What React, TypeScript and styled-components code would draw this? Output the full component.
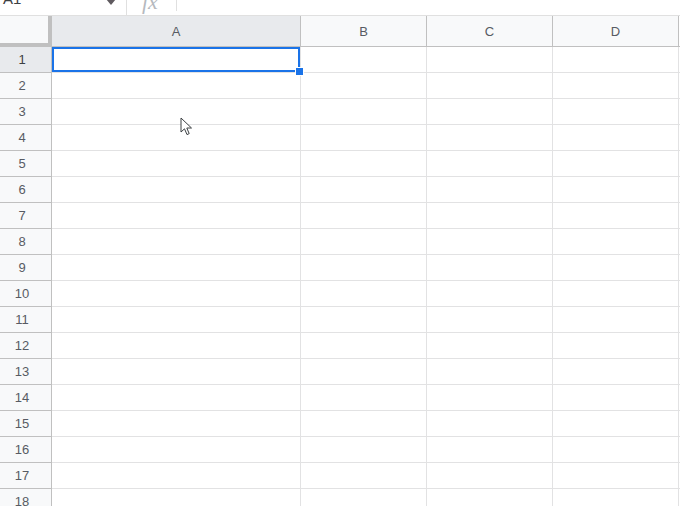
import React from 'react';
import styled, { createGlobalStyle } from 'styled-components';

const GRID_LINE = '#e2e2e3';
const HEADER_LINE = '#c0c0c0';
const HEADER_BG = '#f8f9fa';
const HEADER_SELECTED = '#e8eaed';
const BLUE = '#1a73e8';

const columns = ['A', 'B', 'C', 'D'];
const rows = Array.from({ length: 18 }, (_, i) => i + 1);

const GlobalStyle = createGlobalStyle`
  html, body {
    margin: 0;
    padding: 0;
    background: #fff;
    overflow: hidden;
  }
  body {
    font-family: Arial, "Liberation Sans", sans-serif;
  }
`;

const App = () => {
  return (
    <Page>
      <GlobalStyle />
      <FormulaBar>
        <NameBox>A1</NameBox>
        <Caret />
        <Divider />
        <Fx>fx</Fx>
        <Divider $short />
      </FormulaBar>
      <Grid>
        <Corner />
        {columns.map((col) => (
          <ColHeader key={col} $selected={col === 'A'}>
            {col}
          </ColHeader>
        ))}
        <HeaderFiller />
        {rows.map((row) => (
          <React.Fragment key={row}>
            <RowHeader $selected={row === 1}>{row}</RowHeader>
            {columns.map((col) => (
              <Cell key={col}>
                {row === 1 && col === 'A' && (
                  <Selection>
                    <Handle />
                  </Selection>
                )}
              </Cell>
            ))}
            <RowFiller />
          </React.Fragment>
        ))}
      </Grid>
      <Pointer width="14" height="20" viewBox="0 0 14 20">
        <path
          d="M1 1 L1 15 L4.5 11.8 L7 17.6 L9.2 16.6 L6.8 11 L11.5 11 Z"
          fill="#fff"
          stroke="#3c4043"
          strokeWidth="1"
          strokeLinejoin="round"
        />
      </Pointer>
    </Page>
  );
};

export default App;

const Page = styled.div`
  position: relative;
  width: 680px;
  height: 506px;
  overflow: hidden;
  background: #fff;
`;

const FormulaBar = styled.div`
  display: flex;
  align-items: flex-start;
  height: 16px;
  box-sizing: border-box;
  border-bottom: 1px solid #e0e0e0;
  overflow: hidden;
`;

const NameBox = styled.div`
  width: 100px;
  margin-top: -9px;
  padding-left: 3px;
  font-size: 15px;
  line-height: 16px;
  color: #3c4043;
`;

const Caret = styled.div`
  width: 0;
  height: 0;
  margin-top: -1px;
  margin-left: 3px;
  border-left: 5px solid transparent;
  border-right: 5px solid transparent;
  border-top: 6px solid #5f5a5f;
`;

const Divider = styled.div<{ $short?: boolean }>`
  width: 1px;
  height: ${({ $short }) => ($short ? '11px' : '15px')};
  margin-left: ${({ $short }) => ($short ? '18px' : '10px')};
  background: #e0e0e0;
`;

const Fx = styled.div`
  margin-top: -8px;
  margin-left: 15px;
  font-family: "Liberation Serif", "DejaVu Serif", serif;
  font-style: italic;
  font-size: 22px;
  line-height: 20px;
  color: #b5b9be;
`;

const Grid = styled.div`
  display: grid;
  grid-template-columns: 52px 249px 126px 126px 126px 1fr;
  grid-template-rows: 31px;
  grid-auto-rows: 26px;
`;

const Corner = styled.div`
  box-sizing: border-box;
  background: ${HEADER_BG};
  border-right: 4px solid ${HEADER_LINE};
  border-bottom: 4px solid ${HEADER_LINE};
`;

const ColHeader = styled.div<{ $selected?: boolean }>`
  box-sizing: border-box;
  display: flex;
  align-items: center;
  justify-content: center;
  background: ${({ $selected }) => ($selected ? HEADER_SELECTED : HEADER_BG)};
  border-right: 1px solid ${HEADER_LINE};
  border-bottom: 1px solid ${HEADER_LINE};
  font-size: 13px;
  color: #575b63;
`;

const HeaderFiller = styled.div`
  box-sizing: border-box;
  border-bottom: 1px solid ${HEADER_LINE};
`;

const RowHeader = styled.div<{ $selected?: boolean }>`
  box-sizing: border-box;
  display: flex;
  align-items: center;
  justify-content: center;
  padding-right: 7px;
  background: ${({ $selected }) => ($selected ? HEADER_SELECTED : HEADER_BG)};
  border-right: 1px solid ${HEADER_LINE};
  border-bottom: 1px solid ${HEADER_LINE};
  font-size: 13px;
  color: ${({ $selected }) => ($selected ? '#3c4043' : '#575b63')};
`;

const Cell = styled.div`
  position: relative;
  box-sizing: border-box;
  border-right: 1px solid ${GRID_LINE};
  border-bottom: 1px solid ${GRID_LINE};
`;

const RowFiller = styled.div`
  box-sizing: border-box;
  border-bottom: 1px solid ${GRID_LINE};
`;

const Selection = styled.div`
  position: absolute;
  inset: 0;
  border: 2px solid ${BLUE};
  z-index: 2;
`;

const Handle = styled.div`
  position: absolute;
  right: -6px;
  bottom: -6px;
  width: 7px;
  height: 7px;
  background: ${BLUE};
  border: 1px solid #fff;
`;

const Pointer = styled.svg`
  position: absolute;
  left: 180px;
  top: 117px;
  z-index: 5;
`;
